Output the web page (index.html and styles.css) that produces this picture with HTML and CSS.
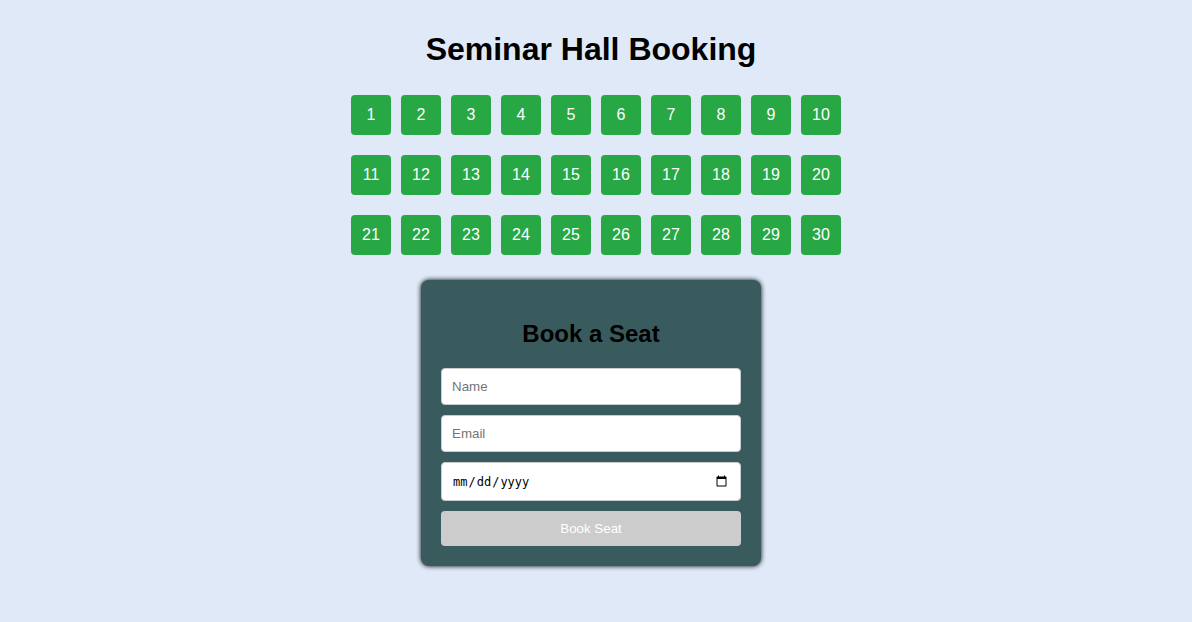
FILE: index.html
```html
<!DOCTYPE html>
<html lang="en">
<head>
<meta charset="utf-8">
<title>Seminar Hall Booking</title>
<link rel="stylesheet" href="styles.css">
</head>
<body>
<main class="container">
<h1 class="title">Seminar Hall Booking</h1>
<div class="seats">
<button class="seat" type="button">1</button>
<button class="seat" type="button">2</button>
<button class="seat" type="button">3</button>
<button class="seat" type="button">4</button>
<button class="seat" type="button">5</button>
<button class="seat" type="button">6</button>
<button class="seat" type="button">7</button>
<button class="seat" type="button">8</button>
<button class="seat" type="button">9</button>
<button class="seat" type="button">10</button>
<button class="seat" type="button">11</button>
<button class="seat" type="button">12</button>
<button class="seat" type="button">13</button>
<button class="seat" type="button">14</button>
<button class="seat" type="button">15</button>
<button class="seat" type="button">16</button>
<button class="seat" type="button">17</button>
<button class="seat" type="button">18</button>
<button class="seat" type="button">19</button>
<button class="seat" type="button">20</button>
<button class="seat" type="button">21</button>
<button class="seat" type="button">22</button>
<button class="seat" type="button">23</button>
<button class="seat" type="button">24</button>
<button class="seat" type="button">25</button>
<button class="seat" type="button">26</button>
<button class="seat" type="button">27</button>
<button class="seat" type="button">28</button>
<button class="seat" type="button">29</button>
<button class="seat" type="button">30</button>
</div>
<form class="booking">
<h2 class="booking-title">Book a Seat</h2>
<input class="field" type="text" placeholder="Name" aria-label="Name">
<input class="field" type="email" placeholder="Email" aria-label="Email">
<input class="field field-date" type="date" aria-label="Date">
<button class="submit" type="submit" disabled>Book Seat</button>
</form>
</main>
</body>
</html>
```
FILE: styles.css
```css
body {
  margin: 0;
  background: #dfe9f8;
  font-family: Arial, "Liberation Sans", sans-serif;
}

.container {
  display: flex;
  flex-direction: column;
  align-items: center;
  padding: 30px 10px 20px 0;
}

.title {
  margin: 0 0 27px;
  font-size: 32px;
  line-height: 38px;
}

.seats {
  display: grid;
  grid-template-columns: repeat(10, 40px);
  gap: 20px 10px;
  margin: 0 0 25px 10px;
}

.seat {
  height: 40px;
  padding: 0;
  border: 0;
  border-radius: 4px;
  background: #28a745;
  color: #fff;
  font: inherit;
}

.booking {
  display: flex;
  flex-direction: column;
  gap: 10px;
  box-sizing: border-box;
  width: 100%;
  max-width: 340px;
  padding: 40px 20px 20px;
  border-radius: 8px;
  background: #3a5b5e;
  box-shadow: 0 0 5px #000;
}

.booking-title {
  margin: 0 0 10px;
  font-size: 24px;
  line-height: 28px;
  text-align: center;
}

.field {
  box-sizing: border-box;
  width: 100%;
  padding: 10px;
  border: 1px solid #ccc;
  border-radius: 4px;
}

.field-date {
  min-height: 39px;
}

.field-date::-webkit-datetime-edit {
  font-size: 12px;
}

.submit {
  padding: 10px;
  border: 0;
  border-radius: 4px;
  background: #ccc;
  color: #fff;
}
```
